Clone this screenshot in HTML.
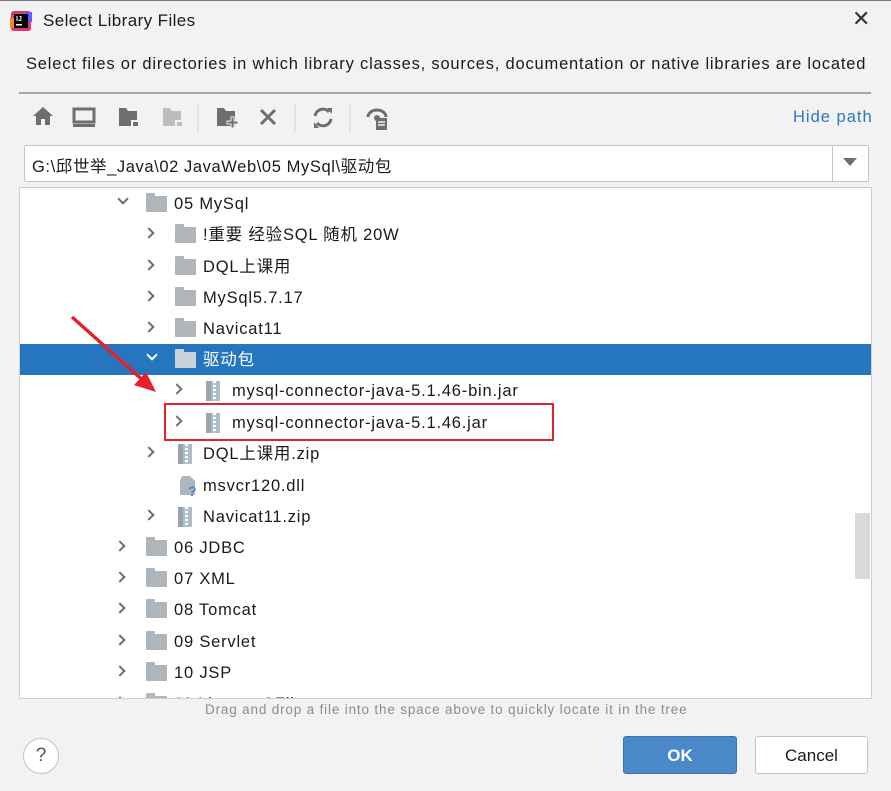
<!DOCTYPE html>
<html><head><meta charset="utf-8"><style>
*{margin:0;padding:0;box-sizing:border-box}
body{width:891px;height:791px;background:#f2f2f2;font-family:"Liberation Sans","Noto Sans CJK SC",sans-serif;position:relative;overflow:hidden;color:#1a1a1a}
.abs{position:absolute}
.row{position:absolute;left:0;right:0;height:31px;font-size:16.5px;line-height:32px;white-space:nowrap;letter-spacing:0.8px}
.row.sel{background:#2675bf;color:#fff}
.chev{position:absolute;top:10px;width:8px;height:8px;border-right:2px solid #6e6e6e;border-bottom:2px solid #6e6e6e}
.r{transform:rotate(-45deg)}
.d{transform:rotate(45deg);top:7px}
.sel .chev{border-color:#fff}
.fold{position:absolute;top:8px;width:21px;height:16px;background:#aeb5bb;border-radius:1px}
.fold:before{content:"";position:absolute;left:0;top:-3px;width:9px;height:4px;background:#aeb5bb;border-radius:1px 1px 0 0}
.sel .fold,.sel .fold:before{background:#c9d3dc}
.jar{position:absolute;top:6px;width:14px;height:20px;background:#b3bbc2;border-left:5px solid #9aa4ad}
.jar:after{content:"";position:absolute;left:2px;top:0;width:3px;height:20px;background:repeating-linear-gradient(#fff 0 2px,#9ecbe8 2px 4px)}
.t{position:absolute}
</style></head><body>
<div class="abs" style="left:0;top:0;width:891px;height:1px;background:#777"></div>
<svg class="abs" style="left:10px;top:10px" width="22" height="22" viewBox="0 0 22 22"><rect x="1" y="1" width="20" height="20" rx="3" fill="#e0356a"/><rect x="0" y="8" width="8" height="10" fill="#f28a24"/><rect x="14" y="2" width="8" height="10" fill="#6b57ff"/><rect x="4" y="4" width="14" height="14" fill="#000"/><text x="6" y="11" font-size="7" fill="#fff" font-family="Liberation Sans" font-weight="bold">IJ</text><rect x="6" y="14" width="6" height="1.5" fill="#fff"/></svg>
<div class="abs" style="left:43px;top:11px;font-size:17px;letter-spacing:0.4px">Select Library Files</div>
<div class="abs" style="left:852px;top:6px;font-size:22px;color:#333">✕</div>
<div class="abs" style="left:26px;top:55px;font-size:16.5px;letter-spacing:0.8px;white-space:nowrap">Select files or directories in which library classes, sources, documentation or native libraries are located</div>
<div class="abs" style="left:19px;top:92px;width:852px;height:2px;background:#a8a8a8"></div>
<svg class="abs" style="left:30px;top:104px" width="370" height="28" viewBox="0 0 370 28" fill="#6e6e6e">
<path d="M3 12 L13 3 L23 12 L20 12 L20 21 L15 21 L15 15 L11 15 L11 21 L6 21 L6 12Z"/>
<rect x="44" y="5" width="20" height="13" fill="none" stroke="#6e6e6e" stroke-width="3"/><rect x="43" y="20" width="22" height="3"/>
<path d="M89 4h7l2 3h9v15H89Z"/><rect x="101" y="16" width="8" height="7" fill="#f2f2f2"/><rect x="103" y="18" width="5" height="4"/>
<path d="M133 4h7l2 3h9v15h-18Z" fill="#bdbdbd"/><rect x="145" y="16" width="8" height="7" fill="#f2f2f2"/><rect x="147" y="18" width="5" height="4" fill="#bdbdbd"/>
<line x1="168" y1="0" x2="168" y2="28" stroke="#d0d0d0"/>
<path d="M187 4h7l2 3h9v15h-18Z"/><path d="M201 13h3v4h4v3h-4v4h-3v-4h-4v-3h4Z" stroke="#f2f2f2" stroke-width="1"/>
<path d="M231 6l14 14M245 6l-14 14" stroke="#6e6e6e" stroke-width="3"/>
<line x1="265" y1="0" x2="265" y2="28" stroke="#d0d0d0"/>
<path d="M285 12a8 8 0 0 1 14-4M301 15a8 8 0 0 1-14 4" fill="none" stroke="#6e6e6e" stroke-width="3"/><path d="M297 4l5 0 0 6z M289 24l-5 0 0-6z"/>
<line x1="320" y1="0" x2="320" y2="28" stroke="#d0d0d0"/>
<path d="M338 13a9 7 0 0 1 18 0" fill="none" stroke="#6e6e6e" stroke-width="3"/><circle cx="347" cy="14" r="3"/><rect x="346" y="14" width="11" height="12"/><path d="M348 18h7M348 21h7" stroke="#f2f2f2" stroke-width="1.5"/>
</svg>
<div class="abs" style="left:793px;top:108px;font-size:16.5px;color:#2b78c2;letter-spacing:1px">Hide path</div>
<div class="abs" style="left:24px;top:145px;width:845px;height:37px;background:#fff;border:1px solid #c4c4c4;border-radius:2px"></div>
<div class="abs" style="left:832px;top:146px;width:1px;height:35px;background:#c4c4c4"></div>
<div class="abs" style="left:843px;top:158px;width:0;height:0;border-left:7px solid transparent;border-right:7px solid transparent;border-top:8px solid #6e6e6e"></div>
<div class="abs" style="left:32px;top:153px;font-size:16.5px;letter-spacing:0.6px">G:\邱世举_Java\02 JavaWeb\05 MySql\驱动包</div>
<div class="abs" style="left:19px;top:187px;width:853px;height:512px;background:#fff;border:1px solid #cfcfcf;overflow:hidden">
<div class="row" style="top:0"><i class="chev d" style="left:99px"></i><i class="fold" style="left:126px"></i><span class="t" style="left:154px">05 MySql</span></div>
<div class="row" style="top:31px"><i class="chev r" style="left:125px"></i><i class="fold" style="left:155px"></i><span class="t" style="left:183px">!重要 经验SQL 随机 20W</span></div>
<div class="row" style="top:63px"><i class="chev r" style="left:125px"></i><i class="fold" style="left:155px"></i><span class="t" style="left:183px">DQL上课用</span></div>
<div class="row" style="top:94px"><i class="chev r" style="left:125px"></i><i class="fold" style="left:155px"></i><span class="t" style="left:183px">MySql5.7.17</span></div>
<div class="row" style="top:125px"><i class="chev r" style="left:125px"></i><i class="fold" style="left:155px"></i><span class="t" style="left:183px">Navicat11</span></div>
<div class="row sel" style="top:156px"><i class="chev d" style="left:128px"></i><i class="fold" style="left:155px"></i><span class="t" style="left:183px">驱动包</span></div>
<div class="row" style="top:187px"><i class="chev r" style="left:153px"></i><i class="jar" style="left:186px"></i><span class="t" style="left:212px">mysql-connector-java-5.1.46-bin.jar</span></div>
<div class="row" style="top:219px"><i class="chev r" style="left:153px"></i><i class="jar" style="left:186px"></i><span class="t" style="left:212px">mysql-connector-java-5.1.46.jar</span></div>
<div class="row" style="top:250px"><i class="chev r" style="left:125px"></i><i class="jar" style="left:158px"></i><span class="t" style="left:183px">DQL上课用.zip</span></div>
<div class="row" style="top:282px"><svg class="abs" style="left:157px;top:5px" width="22" height="22"><path d="M5 1h8l5 5v14H3V6z" fill="#aeb5bb"/><text x="11" y="21" font-size="14" font-weight="bold" fill="#3b8bd6" font-family="Liberation Sans">?</text></svg><span class="t" style="left:183px">msvcr120.dll</span></div>
<div class="row" style="top:313px"><i class="chev r" style="left:125px"></i><i class="jar" style="left:158px"></i><span class="t" style="left:183px">Navicat11.zip</span></div>
<div class="row" style="top:344px"><i class="chev r" style="left:96px"></i><i class="fold" style="left:126px"></i><span class="t" style="left:154px">06 JDBC</span></div>
<div class="row" style="top:375px"><i class="chev r" style="left:96px"></i><i class="fold" style="left:126px"></i><span class="t" style="left:154px">07 XML</span></div>
<div class="row" style="top:406px"><i class="chev r" style="left:96px"></i><i class="fold" style="left:126px"></i><span class="t" style="left:154px">08 Tomcat</span></div>
<div class="row" style="top:438px"><i class="chev r" style="left:96px"></i><i class="fold" style="left:126px"></i><span class="t" style="left:154px">09 Servlet</span></div>
<div class="row" style="top:469px"><i class="chev r" style="left:96px"></i><i class="fold" style="left:126px"></i><span class="t" style="left:154px">10 JSP</span></div>
<div class="row" style="top:500px"><i class="chev r" style="left:96px"></i><i class="fold" style="left:126px"></i><span class="t" style="left:154px">11 Listener&amp;Filter</span></div>
<div class="abs" style="left:835px;top:325px;width:15px;height:66px;background:#d9d9d9"></div>
</div>
<div class="abs" style="left:164px;top:403px;width:390px;height:38px;border:2px solid #e8202a"></div>
<svg class="abs" style="left:60px;top:305px" width="110" height="100"><line x1="12" y1="12" x2="86" y2="78" stroke="#e8202a" stroke-width="3.5"/><path d="M96 87 L74 80 L86 67Z" fill="#e8202a"/></svg>
<div class="abs" style="left:205px;top:702px;font-size:13.5px;color:#8c8c8c;letter-spacing:0.83px;white-space:nowrap">Drag and drop a file into the space above to quickly locate it in the tree</div>
<div class="abs" style="left:23px;top:738px;width:36px;height:36px;border-radius:50%;background:#fff;border:1px solid #c4c4c4;text-align:center;line-height:34px;font-size:19px;color:#555">?</div>
<div class="abs" style="left:623px;top:736px;width:114px;height:38px;background:#4a88c7;border:1px solid #3d74b0;border-radius:3px;color:#fff;text-align:center;line-height:38px;font-size:17px;font-weight:bold">OK</div>
<div class="abs" style="left:755px;top:736px;width:113px;height:38px;background:#fff;border:1px solid #c4c4c4;border-radius:3px;text-align:center;line-height:38px;font-size:17px">Cancel</div>
</body></html>
